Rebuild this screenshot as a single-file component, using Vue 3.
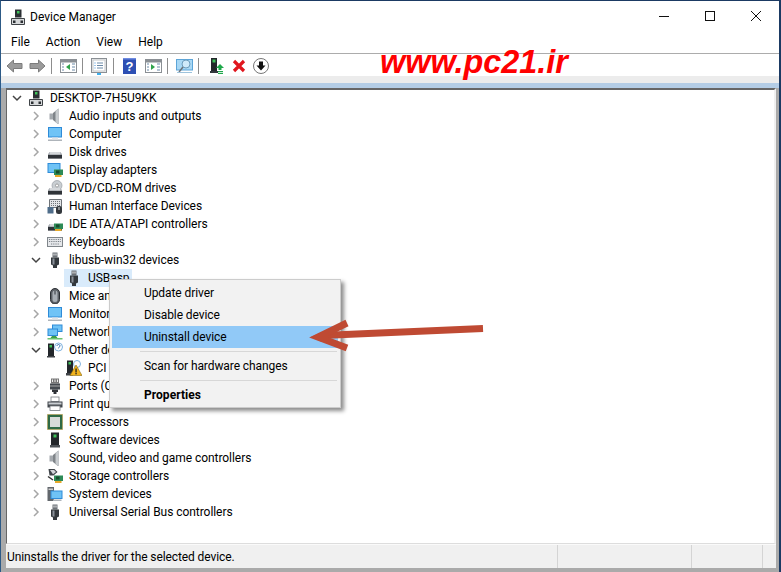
<script setup>
const plug = '<rect x="5.500" y="0.500" width="5" height="5" fill="#6d7278"/><rect x="6.500" y="1.500" width="1" height="2" fill="#eee"/><rect x="8.500" y="1.500" width="1" height="2" fill="#eee"/><path d="M4 5.500h8v7l-2 1v2.500H6v-2.500l-2-1z" fill="#33383d"/><rect x="5.500" y="6.500" width="2" height="6" fill="#8a9099"/>'
const speaker = '<path d="M2.500 5.500h4v6h-4z" fill="#a4a9ae"/><path d="M6 5 11.500 0.500v16L6 12z" fill="#7f8489"/><path d="M8.500 3l3-2.500v16l-3-2.500z" fill="#c8cccf"/>'
const mon = '<rect x="1" y="1" width="14" height="10.500" fill="#2f8bd8"/><rect x="2" y="2" width="12" height="8.500" fill="#6fc3f6"/><rect x="1" y="13.500" width="14" height="1.500" fill="#aeb4ba"/><rect x="5" y="11.500" width="6" height="2" fill="#e1e4e7"/>'
const card = '<rect x="7" y="7.500" width="9" height="5.500" fill="#2d8b57"/><rect x="9" y="8.500" width="3.500" height="3" fill="#174d2e"/><rect x="8" y="13" width="6.500" height="2" fill="#e6a92b"/>'
const drive = '<path d="M2.500 8h11l1.500 2.500v4H1v-4z" fill="#8f949a"/><rect x="1" y="11" width="14" height="3.500" fill="#2f3338"/><rect x="2.500" y="8" width="11" height="2.500" fill="#d5d8db"/>'
const icons = {
  pc: '<path d="M5 0.500h6.500v8H5z" fill="#2b2f33"/><rect x="7" y="2" width="2.500" height="2.500" fill="#3fc15a"/><path d="M1.500 9.500h13v6h-13z" fill="#d6d8da" stroke="#3f4347"/><rect x="3" y="11.500" width="2.500" height="2.500" fill="#2b2f33"/><rect x="10.500" y="11.500" width="2.500" height="2.500" fill="#2b2f33"/>',
  audio: speaker,
  computer: mon,
  disk: drive,
  display: '<rect x="0.500" y="1" width="13" height="10" fill="#2f8bd8"/><rect x="1.500" y="2" width="11" height="8" fill="#6fc3f6"/>' + card,
  dvd: '<circle cx="10" cy="5.500" r="5" fill="#c9ced2" stroke="#8f949a" stroke-width=".6"/><circle cx="10" cy="5.500" r="1.500" fill="#fff" stroke="#777" stroke-width=".6"/>' + drive,
  hid: '<path d="M2.500 1.500h12v8h-12z" fill="#e3e5e8" stroke="#6e7378"/><path d="M4 3.500h9M4 5.500h9M4 7.500h9" stroke="#6d7379" stroke-dasharray="1 1"/><path d="M0.500 15.500V9h6v6.500z" fill="#4f6d8a"/><rect x="9" y="8" width="6" height="8" rx="2.500" fill="#33383d"/><rect x="11.500" y="9" width="1" height="3" fill="#ddd"/>',
  ide: drive + card,
  keyboard: '<rect x="0.500" y="3.500" width="15" height="9" fill="#e5e7ea" stroke="#80868b"/><path d="M2 5.500h12M2 7.500h12M4 10h8" stroke="#7a8087" stroke-dasharray="1 .8"/>',
  usb: plug,
  mouse: '<rect x="3.500" y="0.500" width="9" height="15.500" rx="4.500" fill="#5c6167" stroke="#2b2f33"/><rect x="5.500" y="2.500" width="5" height="11.500" rx="2.500" fill="#a9afb5"/><rect x="7.500" y="2.500" width="1" height="4" fill="#33373c"/>',
  monitor: mon,
  network: '<rect x="5" y="0.500" width="10.500" height="7.500" fill="#2f8bd8"/><rect x="6" y="1.500" width="8.500" height="5.500" fill="#6fc3f6"/><rect x="0.500" y="4.500" width="10.500" height="7.500" fill="#2f8bd8"/><rect x="1.500" y="5.500" width="8.500" height="5.500" fill="#6fc3f6"/><rect x="0.500" y="14" width="15" height="1.500" fill="#6cc36f"/><path d="M5 12h4l1.500 2h-7z" fill="#3f9d4b"/>',
  other: '<rect x="1" y="1.500" width="6" height="12.500" fill="#23272b"/><rect x="2.500" y="3" width="2.500" height="2.500" fill="#3fc15a"/><rect x="0" y="14" width="8" height="1.500" fill="#3f4347"/><circle cx="11.500" cy="5" r="4" fill="#fff" stroke="#7fb2de"/><path d="M10 4c0-2 3-2 3 0 0 1-1.500 1-1.500 2.300" fill="none" stroke="#2f6fb0"/>',
  pci: '<rect x="1" y="0.500" width="6" height="13" fill="#23272b"/><rect x="2.500" y="2" width="2.500" height="2.500" fill="#3fc15a"/><rect x="0" y="13" width="7" height="2.500" fill="#3f4347"/><circle cx="11" cy="4" r="3.500" fill="#fff" stroke="#7fb2de"/><path d="M4 15.500 10 5l6 10.500z" fill="#f2b31c" stroke="#8a6a10" stroke-width=".6"/><rect x="9.400" y="8.500" width="1.300" height="4" fill="#222"/><rect x="9.400" y="13" width="1.300" height="1.300" fill="#222"/>',
  ports: '<rect x="4" y="0.500" width="8" height="5" fill="#777"/><path d="M5.500 1.500v2.500M8 1.500v2.500M10.500 1.500v2.500" stroke="#eee"/><rect x="3" y="5.500" width="10" height="6" fill="#444a50"/><path d="M3 8h10" stroke="#aaa"/><path d="M5 11.500h6V14H9.500v2h-3v-2H5z" fill="#2f3338"/>',
  printer: '<rect x="4" y="1" width="8" height="4.500" fill="#fff" stroke="#777c81" stroke-width=".8"/><rect x="0.500" y="5.500" width="15" height="6" fill="#42474c"/><rect x="1.500" y="6.500" width="13" height="2" fill="#c9ced2"/><rect x="3" y="10" width="10" height="4.500" fill="#fff" stroke="#777c81" stroke-width=".8"/>',
  cpu: '<rect x="0.500" y="0.500" width="15" height="15" fill="#2f6a45"/><rect x="0.500" y="0.500" width="15" height="15" fill="none" stroke="#c19a3a" stroke-dasharray="1 1"/><rect x="3" y="3" width="10" height="10" fill="#d8dbd8"/>',
  software: '<rect x="4" y="0.500" width="8" height="12.500" fill="#23272b"/><rect x="6.500" y="2.500" width="3" height="3" fill="#3fc15a"/><rect x="3" y="13" width="10" height="2.500" fill="#4d5257"/>',
  sound: speaker,
  storage: '<path d="M1.500 1h6l3 3-4 3.500h-4z" fill="#3f4449"/><path d="M3 2h4l2 2-3 2.300" fill="#d3d6d9"/><path d="M1 8.500l5 3.500" stroke="#333" stroke-width="1.500"/>' + card,
  system: '<rect x="0.500" y="1" width="6.500" height="14" fill="#62676c"/><rect x="1.500" y="2.500" width="4.500" height="1.500" fill="#ccc"/><rect x="3.500" y="4.500" width="12" height="8.500" fill="#2f8bd8"/><rect x="4.500" y="5.500" width="10" height="6.500" fill="#6fc3f6"/><rect x="6" y="13.500" width="8.500" height="1.500" fill="#aeb4ba"/>'
}
const rows = [
  { t: 'DESKTOP-7H5U9KK', i: 'pc', d: 0, open: true },
  { t: 'Audio inputs and outputs', i: 'audio', d: 1 },
  { t: 'Computer', i: 'computer', d: 1 },
  { t: 'Disk drives', i: 'disk', d: 1 },
  { t: 'Display adapters', i: 'display', d: 1 },
  { t: 'DVD/CD-ROM drives', i: 'dvd', d: 1 },
  { t: 'Human Interface Devices', i: 'hid', d: 1 },
  { t: 'IDE ATA/ATAPI controllers', i: 'ide', d: 1 },
  { t: 'Keyboards', i: 'keyboard', d: 1 },
  { t: 'libusb-win32 devices', i: 'usb', d: 1, open: true },
  { t: 'USBasp', i: 'usb', d: 2, sel: true },
  { t: 'Mice and other pointing devices', i: 'mouse', d: 1 },
  { t: 'Monitors', i: 'monitor', d: 1 },
  { t: 'Network adapters', i: 'network', d: 1 },
  { t: 'Other devices', i: 'other', d: 1, open: true },
  { t: 'PCI Device', i: 'pci', d: 2 },
  { t: 'Ports (COM & LPT)', i: 'ports', d: 1 },
  { t: 'Print queues', i: 'printer', d: 1 },
  { t: 'Processors', i: 'cpu', d: 1 },
  { t: 'Software devices', i: 'software', d: 1 },
  { t: 'Sound, video and game controllers', i: 'sound', d: 1 },
  { t: 'Storage controllers', i: 'storage', d: 1 },
  { t: 'System devices', i: 'system', d: 1 },
  { t: 'Universal Serial Bus controllers', i: 'usb', d: 1 }
]
const menus = ['File', 'Action', 'View', 'Help']
</script>

<template>
  <div class="window">
    <header class="titlebar">
      <svg class="appicon" width="16" height="16" viewBox="0 0 16 16" v-html="icons.pc"></svg>
      <span class="title">Device Manager</span>
      <div class="controls">
        <svg width="46" height="30" viewBox="0 0 46 30"><path d="M18 15.500h10" stroke="#111"/></svg>
        <svg width="46" height="30" viewBox="0 0 46 30"><rect x="18.500" y="10.500" width="9" height="9" fill="none" stroke="#111"/></svg>
        <svg width="46" height="30" viewBox="0 0 46 30"><path d="M18 10l10 10M28 10 18 20" stroke="#111"/></svg>
      </div>
    </header>
    <nav class="menubar"><span v-for="m in menus" :key="m">{{ m }}</span></nav>
    <div class="toolbar">
      <svg class="tool t-back" width="17" height="16" viewBox="0 0 17 16"><path d="M1 8 7.500 2v3.500H16v5H7.500V14z" fill="#9b9b9b" stroke="#7c7c7c"/></svg>
      <svg class="tool t-fwd" width="17" height="16" viewBox="0 0 17 16"><path d="M16 8 9.500 2v3.500H1v5h8.500V14z" fill="#9b9b9b" stroke="#7c7c7c"/></svg>
      <i class="sep s1"></i>
      <svg class="tool t-a" width="17" height="16" viewBox="0 0 17 16"><rect x=".5" y="1.500" width="16" height="13" fill="#fff" stroke="#8a8f94"/><rect x="1" y="2" width="15" height="2.500" fill="#8a8f94"/><path d="M10 6v6L6 9z" fill="#2fa34a"/><path d="M2 6h2M2 9h2M2 12h2M12 6h3M12 9h3M12 12h3" stroke="#6b8aa8"/></svg>
      <i class="sep s2"></i>
      <svg class="tool t-b" width="16" height="17" viewBox="0 0 16 17"><rect x=".5" y=".5" width="15" height="14" fill="#f2f2f2" stroke="#8a8f94"/><rect x="2" y="2" width="12" height="11" fill="#fff" stroke="#c4c7ca"/><path d="M6 5h6M6 7.500h6M6 10h6" stroke="#6b8aa8"/><path d="M3.500 5h1M3.500 7.500h1M3.500 10h1" stroke="#3a8fd8"/><rect x="6" y="15" width="4" height="2" fill="#3fb0ef"/></svg>
      <i class="sep s3"></i>
      <svg class="tool t-c" width="13" height="16" viewBox="0 0 13 16"><rect width="13" height="16" fill="#2d4fb3"/><path d="M0 0h13v1.500H0z" fill="#6f8be0"/><text x="6.500" y="13" text-anchor="middle" fill="#fff" font-family="Liberation Sans" font-size="13" font-weight="700">?</text></svg>
      <svg class="tool t-d" width="17" height="16" viewBox="0 0 17 16"><rect x=".5" y="1.500" width="16" height="13" fill="#fff" stroke="#8a8f94"/><rect x="1" y="2" width="15" height="2.500" fill="#8a8f94"/><path d="M6 6v6l4-3z" fill="#2fa34a"/><path d="M2 6h2M2 9h2M2 12h2M12 6h3M12 9h3M12 12h3" stroke="#6b8aa8"/></svg>
      <i class="sep s4"></i>
      <svg class="tool t-e" width="17" height="16" viewBox="0 0 17 16"><rect x=".5" y="1.500" width="16" height="10.500" fill="#a8d8f5" stroke="#5da5d8"/><circle cx="10" cy="6" r="4" fill="#cfeafa" stroke="#6d9dbd"/><path d="M7 9 3 14" stroke="#6c7278" stroke-width="1.500"/><path d="M1 14.500h15" stroke="#9ec3dc"/></svg>
      <i class="sep s5"></i>
      <svg class="tool t-f" width="14" height="16" viewBox="0 0 14 16"><rect x="1" y="0" width="6" height="13" fill="#23272b"/><rect x="2.500" y="1.500" width="3" height="3" fill="#3fc15a"/><rect x="0" y="13" width="8" height="2" fill="#33373c"/><path d="M10 6l4 4h-2.500v2h-3v-2H6z" fill="#1fa84a"/><rect x="8" y="13" width="5" height="1.200" fill="#1fa84a"/><rect x="8" y="15" width="5" height="1" fill="#1fa84a"/></svg>
      <svg class="tool t-g" width="14" height="14" viewBox="0 0 14 14"><path d="M2 2l10 10M12 2 2 12" stroke="#e0161e" stroke-width="3.200"/></svg>
      <svg class="tool t-h" width="16" height="16" viewBox="0 0 16 16"><circle cx="8" cy="8" r="7.500" fill="#fff" stroke="#777"/><path d="M6 3.500h4v4h2.500L8 12.500 3.500 7.500H6z" fill="#111"/></svg>
    </div>
    <div class="band-gray"></div>
    <div class="band-blue"></div>
    <div class="body">
      <main class="tree">
        <div v-for="r in rows" :key="r.t" class="row" :class="'d' + r.d">
          <svg class="chev" width="10" height="10" viewBox="0 0 10 10" :class="{ none: r.d === 2 }">
            <path v-if="r.open" d="M1 3l4 4 4-4" fill="none" stroke="#444" stroke-width="1.500"/>
            <path v-else d="M3 1l4 4-4 4" fill="none" stroke="#a6a6a6" stroke-width="1.500"/>
          </svg>
          <div class="label" :class="{ sel: r.sel }">
            <svg width="16" height="16" viewBox="0 0 16 16" v-html="icons[r.i]"></svg>
            <span>{{ r.t }}</span>
          </div>
        </div>
      </main>
      <footer class="status">
        <span class="msg">Uninstalls the driver for the selected device.</span>
        <i class="cell c1"></i><i class="cell c2"></i><i class="cell c3"></i>
      </footer>
    </div>
    <div class="watermark">www.pc21.ir</div>
    <div class="ctx">
      <div class="item">Update driver</div>
      <div class="item">Disable device</div>
      <div class="item hot">Uninstall device</div>
      <hr />
      <div class="item">Scan for hardware changes</div>
      <hr />
      <div class="item strong">Properties</div>
    </div>
    <svg class="arrow" width="781" height="572" viewBox="0 0 781 572"><g fill="none" stroke="#bf4a33" stroke-width="7"><path d="M483 328.500 322 335.500"/><path d="M347 323 318 337 347 348"/></g><path d="M311 337 322 332v10z" fill="#bf4a33"/></svg>
  </div>
</template>

<style>
html, body { margin: 0; background: #fff; }
</style>

<style scoped>
.window {
  position: relative;
  width: 781px;
  height: 572px;
  box-sizing: border-box;
  border-top: 1px solid #1b3a63;
  border-left: 1px solid #2d5a86;
  border-right: 2px solid #1b3a63;
  display: flex;
  flex-direction: column;
  overflow: hidden;
  background: #fff;
  font-family: Roboto, "Open Sans", sans-serif;
  font-size: 12px;
  color: #000;
}
.titlebar { height: 32px; display: flex; align-items: center; flex: none; padding-left: 9px; }
.appicon { margin-right: 4px; margin-top: -1px; }
.title { margin-top: -1px; }
.controls { margin-left: auto; display: flex; margin-top: -2px; }
.controls svg { display: block; }
.menubar { display: flex; align-items: center; padding: 0 0 2px 10px; height: 18px; flex: none; gap: 16px; border-bottom: 1px solid #acacac; }
.toolbar { height: 22px; box-sizing: border-box; padding-top: 2px; flex: none; display: flex; align-items: center; }
.tool, .sep { flex: none; display: block; }
.sep { width: 1px; height: 16px; background: #8d8d8d; }
.t-back { margin-left: 5px; }
.t-fwd { margin-left: 6px; }
.s1 { margin-left: 5px; }
.t-a { margin-left: 8px; }
.s2 { margin-left: 5px; }
.t-b { margin-left: 8px; }
.s3 { margin-left: 6px; }
.t-c { margin-left: 9px; }
.t-d { margin-left: 9px; }
.s4 { margin-left: 5px; }
.t-e { margin-left: 8px; }
.s5 { margin-left: 5px; }
.t-f { margin-left: 11px; }
.t-g { margin-left: 8px; }
.t-h { margin-left: 7px; }
.band-gray { height: 7px; background: #ececec; flex: none; }
.band-blue { height: 5px; background: #b4cde6; flex: none; }
.body { flex: 1; display: flex; flex-direction: column; background: #aaa; padding: 0 3px 4px 5px; min-height: 0; }
.tree {
  flex: 1;
  min-height: 0;
  background: #fff;
  border-top: 2px solid #666;
  border-left: 1px solid #666;
  border-right: 2px solid #f0f0f0;
  border-bottom: 1px solid #ddd;
  box-sizing: border-box;
}
.row { height: 18px; display: flex; align-items: center; }
.row:first-child { margin-top: -1px; }
.chev { flex: none; margin-right: 4px; }
.chev.none { visibility: hidden; }
.row.d0 { padding-left: 5px; }
.row.d1 { padding-left: 24px; }
.row.d2 { padding-left: 43px; }
.label { display: flex; align-items: center; height: 18px; padding: 0 2px; gap: 6px; white-space: nowrap; letter-spacing: -.05px; }
.label svg { flex: none; display: block; }
.label span { position: relative; top: -.5px; }
.label.sel { background: #d9ebfb; }
.status { height: 24px; flex: none; background: #f0f0f0; display: flex; align-items: center; border-top: 1px solid #fafafa; box-sizing: border-box; }
.msg { padding-left: 1px; letter-spacing: -.1px; }
.cell { flex: none; width: 1px; align-self: stretch; background: #d4d4d4; }
.c1 { margin-left: auto; }
.c2 { margin-left: 133px; }
.c3 { margin-left: 70px; margin-right: 13px; }
.watermark {
  position: absolute;
  left: 379px;
  top: 44px;
  font-family: "Liberation Sans", Arial, sans-serif;
  font-size: 32.4px;
  line-height: 34px;
  font-weight: 700;
  font-style: italic;
  color: #ff0000;
}
.ctx {
  position: absolute;
  left: 108px;
  top: 278px;
  width: 232px;
  height: 129px;
  box-sizing: border-box;
  padding: 2px;
  background: #f2f2f2;
  border: 1px solid #ccc;
  box-shadow: 3px 3px 4px rgba(0, 0, 0, .45);
}
.item { height: 22px; line-height: 22px; padding-left: 32px; letter-spacing: -.08px; }
.item.hot { background: #91c9f7; }
.item.strong { font-weight: 700; letter-spacing: .05px; }
.ctx hr { border: 0; height: 1px; background: #d7d7d7; margin: 3px 1px 3px 28px; }
.arrow { position: absolute; left: -1px; top: -1px; pointer-events: none; }
</style>
